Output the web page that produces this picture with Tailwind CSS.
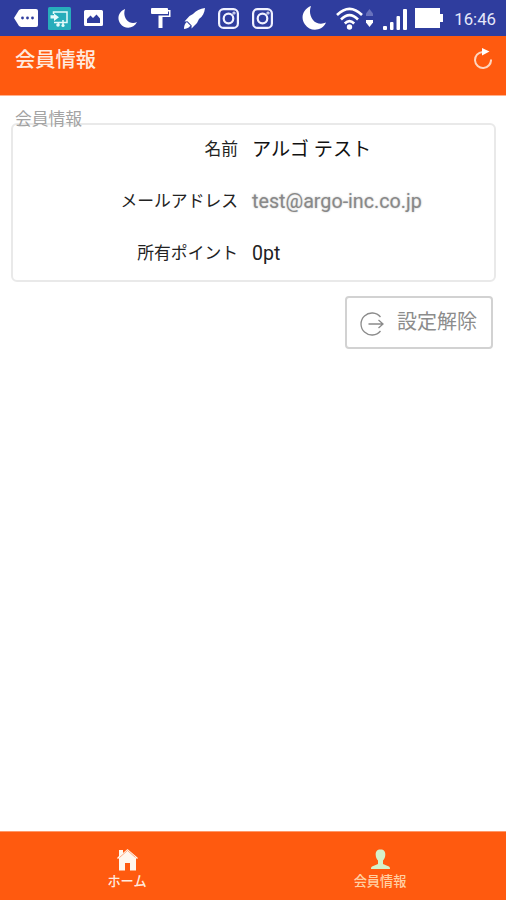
<!DOCTYPE html>
<html lang="ja">
<head>
    <meta charset="UTF-8">
    <meta name="viewport" content="width=device-width, initial-scale=1.0">
    <title>会員情報</title>
    <script src="https://cdn.jsdelivr.net/npm/@tailwindcss/browser@4"></script>
</head>
<body class="flex flex-col h-screen overflow-hidden bg-white font-[Roboto,'Noto_Sans_CJK_JP',sans-serif]">

    <!-- Status bar -->
    <div class="flex items-center h-9 shrink-0 pl-[14px] pr-[10px] bg-[#2f3d9e] text-white">
        <svg class="w-6 h-[18px] shrink-0" viewBox="0 0 24 18" fill="#fff">
            <path d="M7 0h15a2 2 0 0 1 2 2v14a2 2 0 0 1-2 2H7L5 17 0 9l5-8z"/>
            <g fill="#2f3d9e"><circle cx="8.5" cy="9" r="1.4"/><circle cx="13.5" cy="9" r="1.4"/><circle cx="18.5" cy="9" r="1.4"/></g>
        </svg>
        <svg class="w-[23px] h-[23px] shrink-0 ml-[10px]" viewBox="0 0 23 23" fill="none">
            <rect width="23" height="23" rx="1.5" fill="#27adbb"/>
            <path d="M5.500 7V5h13.500v10.500h-8" stroke="#e6fbfb" stroke-width="1.5"/>
            <path d="M2.500 8.300h3.500V6.500l5 3.800-5 3.800v-2.500H2.500z" fill="#e6fbfb"/>
            <path d="M6 15.500h4.500V18M15 13v5.500" stroke="#e6fbfb" stroke-width="1.500"/>
            <circle cx="10" cy="18" r="1.800" fill="#e6fbfb"/><circle cx="15" cy="18.500" r="1.600" fill="#e6fbfb"/>
        </svg>
        <svg class="w-[19px] h-4 shrink-0 ml-[13px]" viewBox="0 0 19 16">
            <path fill="#fff" fill-rule="evenodd" d="M1.500 0h16A1.500 1.500 0 0 1 19 1.500v13a1.500 1.500 0 0 1-1.500 1.500h-16A1.500 1.500 0 0 1 0 14.500v-13A1.500 1.500 0 0 1 1.500 0zM3 13h13V8.500L12.500 4.500 9 8 6.500 5.500 3 9z"/>
        </svg>
        <svg class="w-[19px] h-[19px] shrink-0 ml-[15px]" viewBox="0 0 24 24" fill="#fff"><path d="M9 0C1 3-2 12 3 18.500c5 7.500 17 7 21-2C20 18.500 14 18 11 14 8 10 7 5 9 0z"/></svg>
        <svg class="w-5 h-5 shrink-0 ml-[14px]" viewBox="0 0 20 20">
            <path fill="#fff" d="M1 0h15a1 1 0 0 1 1 1v1h2.500v7h-8v11h-4V7.500H18V3.500h-1V6H1a1 1 0 0 1-1-1V1a1 1 0 0 1 1-1z"/>
        </svg>
        <svg class="w-[21px] h-[21px] shrink-0 ml-[13px]" viewBox="0 0 21 21" fill="#fff">
            <path d="M21 0c-5 .5-9 2.500-12 6L5.500 8 .5 13.500l3-.2L7.700 17.500 7.500 20.500l5.500-5.500 2-4C18.500 8.500 20.500 5 21 0z"/>
            <path d="M2.800 14C.5 16 0 18 0 21c2 0 4-.5 6.500-3.200z"/>
        </svg>
        <svg class="w-[21px] h-[21px] shrink-0 ml-[13px]" viewBox="0 0 21 21" fill="none" stroke="#f1f2ff" stroke-width="2.200">
            <rect x="1.100" y="1.100" width="18.800" height="18.800" rx="4.500"/><circle cx="10.500" cy="10.500" r="4.800"/><circle cx="16" cy="5" r=".5"/>
        </svg>
        <svg class="w-[21px] h-[21px] shrink-0 ml-[13px]" viewBox="0 0 21 21" fill="none" stroke="#f1f2ff" stroke-width="2.200">
            <rect x="1.100" y="1.100" width="18.800" height="18.800" rx="4.500"/><circle cx="10.500" cy="10.500" r="4.800"/><circle cx="16" cy="5" r=".5"/>
        </svg>

        <svg class="w-6 h-6 shrink-0 ml-[29px]" viewBox="0 0 24 24" fill="#fff"><path d="M9 0C1 3-2 12 3 18.500c5 7.500 17 7 21-2C20 18.500 14 18 11 14 8 10 7 5 9 0z"/></svg>
        <svg class="w-[27px] h-[23px] shrink-0 ml-[10px]" viewBox="0 0 27 23" fill="none" stroke="#fff" stroke-width="2.600">
            <path d="M1 8Q13.500-4.500 26 8M5 12.500q8.500-8.500 17 0M8.800 16.500q4.700-4.700 9.400 0"/>
            <circle cx="13.500" cy="20" r="2.700" fill="#fff" stroke="none"/>
        </svg>
        <svg class="w-[7px] h-[18px] shrink-0 ml-[3px]" viewBox="0 0 7 18">
            <path fill="#6872bd" d="M3.500 0L7 4.500V7H0V4.500z"/><path fill="#fff" d="M0 11h7v2.500L3.500 18 0 13.500z"/>
        </svg>
        <svg class="w-6 h-[21px] shrink-0 ml-[10px] mt-[3px]" viewBox="0 0 24 21" fill="#fff">
            <rect y="17" width="4" height="4" rx="1"/><rect x="7" y="13" width="3.500" height="8" rx="1"/><rect x="13.500" y="7" width="3.500" height="14" rx="1"/><rect x="20" width="4" height="21" rx="1"/>
        </svg>
        <svg class="w-7 h-5 shrink-0 ml-2" viewBox="0 0 28 20" fill="#fff"><path d="M0 0h25v6h3v8h-3v6H0z"/></svg>
        <span class="ml-auto mt-px text-[16.800px] leading-5 text-[#e6e8fa]">16:46</span>
    </div>

    <!-- Header -->
    <header class="flex justify-between h-[60px] shrink-0 pl-[15px] pr-[14px] bg-[#ff5a0f] border-b border-[#ffb18d]">
        <h1 class="mt-[10px] text-[20.300px] leading-7 font-medium text-[#ffeadf]">会員情報</h1>
        <svg class="w-[18px] h-[21px] mt-3" viewBox="0 0 18 21" fill="none">
            <path d="M8.500 4A8 8 0 1 0 17 11.500" stroke="#ffd5be" stroke-width="2"/>
            <path d="M8 0l7.500 3.500L8 7.500z" fill="#fff"/>
        </svg>
    </header>

    <!-- Member info -->
    <main class="flex-1 pt-[27px] pl-[11px] pr-[10px]">
        <section class="relative h-[159px] border-2 border-[#e9e9e9] rounded-md">
            <h2 class="absolute left-[2px] -top-[18px] text-[16.800px] leading-6 text-[#a3a3a3]">会員情報</h2>
            <dl class="grid grid-cols-[225px_1fr] auto-rows-[52px] gap-x-[14px] -mt-px items-center text-[#222]">
                <dt class="text-right text-[16.800px]">名前</dt>
                <dd class="text-[19.200px] text-[#111]">アルゴ テスト</dd>
                <dt class="text-right text-[16.800px]">メールアドレス</dt>
                <dd class="text-[19.700px] text-[#888] [text-shadow:0_0_2px_#bbb]">test@argo-inc.co.jp</dd>
                <dt class="text-right text-[16.800px]">所有ポイント</dt>
                <dd class="text-[19.500px]">0pt</dd>
            </dl>
        </section>
        <button class="flex items-center w-[148px] h-[53px] mt-[14px] ml-auto mr-[3px] pl-[13px] border-2 border-[#d2d2d2] rounded text-[#8c8c8c]">
            <svg class="w-6 h-6 mt-0.5" viewBox="0 0 24 24" fill="none" stroke="#8b8b8b" stroke-width="1.300">
                <path d="M20.500 5A11 11 0 1 0 20.500 19M8.500 12H23M18.500 8l4.500 4-4.500 4"/>
            </svg>
            <span class="ml-[13px] text-[20px] leading-6 -mt-0.5">設定解除</span>
        </button>
    </main>

    <!-- Bottom navigation -->
    <nav class="grid grid-cols-2 h-[69px] shrink-0 bg-[#ff5a0f] border-t border-[#ff986a] text-[13.200px] leading-5 font-medium">
        <a class="flex flex-col items-center pt-4 pl-px text-[#ffeadf]">
            <svg class="w-[21px] h-[23px]" viewBox="0 0 21 23" fill="#fff7ee">
                <path d="M2 2h4v3l4.500-4L21 10l-1 1-1-1v12.500h-6v-7.500H8v7.500H2V10l-1 1-1-1 2-2z"/>
                <path d="M2.500 9.500l8-7 8 7" fill="none" stroke="#ff8a50" stroke-width=".7"/>
            </svg>
            <span class="mt-px">ホーム</span>
        </a>
        <a class="flex flex-col items-center pt-4 pl-px text-[#ffd0a3]">
            <svg class="w-[19px] h-[23px]" viewBox="0 0 19 23" fill="#d5f2cb">
                <path d="M9.500 1.500c3.500 0 5 2 4.800 5.500-.1 3-1.500 4.500-2.300 5.500v3.500l6 2.500c.8.500 1 1.500 1 2.500H0c0-1 .2-2 1-2.500L7 16v-3.500C6.200 11.500 4.800 10 4.700 7 4.500 3.500 6 1.500 9.500 1.500z"/>
            </svg>
            <span class="mt-px">会員情報</span>
        </a>
    </nav>

</body>
</html>
